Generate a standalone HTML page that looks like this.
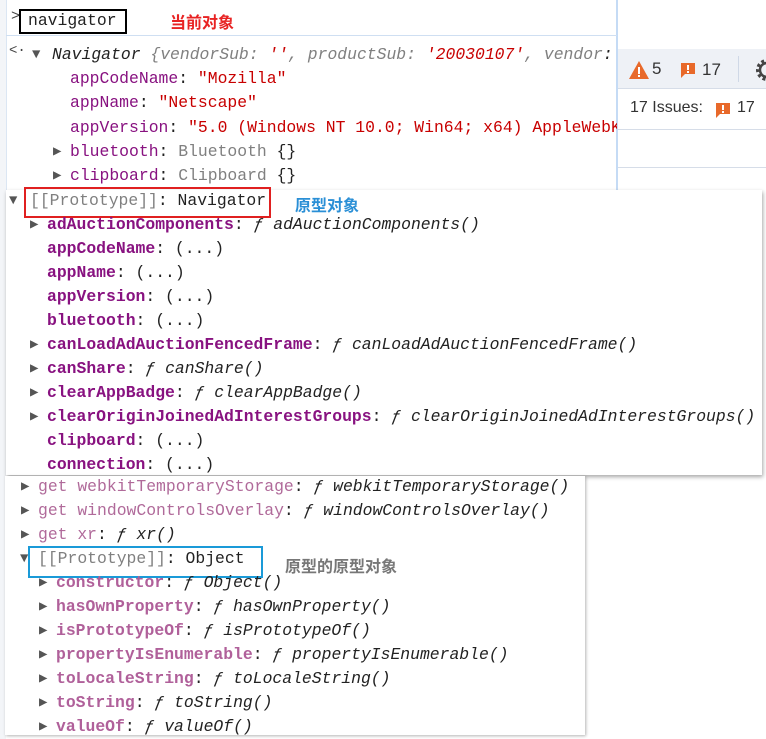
<!DOCTYPE html>
<html><head><meta charset="utf-8"><style>
*{margin:0;padding:0;box-sizing:border-box}
body{width:766px;height:739px;background:#fff;position:relative;overflow:hidden;font-family:"Liberation Mono",monospace;font-size:16.4px;color:#222}
.abs{position:absolute}
.row{position:absolute;white-space:pre;height:24px;line-height:24px;margin-top:1px}
.k{color:#881280}
.kb{color:#881280;font-weight:bold}
.kp{color:#b0609a;font-weight:bold}
.kg{color:#b06a9a}
.s{color:#c80000}
.g{color:#808080}
.i{font-style:italic}
.t{position:absolute;font-size:14px;color:#555;line-height:24px;margin-top:1px}
.cjk{font-family:"Liberation Sans","Noto Sans CJK SC",sans-serif;font-weight:bold;font-size:16px;position:absolute;white-space:nowrap}
</style></head><body>
<div class="abs" style="left:617px;top:49px;width:149px;height:40px;background:#eef1f6;border-bottom:1px solid #d6dde8"></div>
<div class="abs" style="left:738px;top:56px;width:1px;height:26px;background:#cfd8e6"></div>
<svg class="abs" style="left:628px;top:60px" width="22" height="20"><path d="M11 1 L21 19 H1 Z" fill="#e8692a"/><rect x="10" y="7" width="2" height="7" fill="#fff"/><rect x="10" y="15" width="2" height="2" fill="#fff"/></svg>
<div class="abs" style="left:652px;top:59px;font-family:'Liberation Sans',sans-serif;font-size:17px;color:#333">5</div>
<svg class="abs" style="left:680px;top:62px" width="16" height="17"><path d="M1 1 H15 V12 H5 L1 16 Z" fill="#e8692a"/><rect x="7" y="3" width="2" height="5" fill="#fff"/><rect x="7" y="9" width="2" height="2" fill="#fff"/></svg>
<div class="abs" style="left:702px;top:60px;font-family:'Liberation Sans',sans-serif;font-size:17px;color:#333">17</div>
<svg class="abs" style="left:752px;top:57px" width="14" height="26"><circle cx="15" cy="13" r="7" fill="none" stroke="#444" stroke-width="2.5"/><circle cx="15" cy="13" r="9.5" fill="none" stroke="#444" stroke-width="3" stroke-dasharray="3 2.5"/></svg>
<div class="abs" style="left:630px;top:99px;font-family:'Liberation Sans',sans-serif;font-size:16px;color:#333">17 Issues:</div>
<svg class="abs" style="left:715px;top:102px" width="16" height="17"><path d="M1 1 H15 V12 H5 L1 16 Z" fill="#e8692a"/><rect x="7" y="3" width="2" height="5" fill="#fff"/><rect x="7" y="9" width="2" height="2" fill="#fff"/></svg>
<div class="abs" style="left:737px;top:99px;font-family:'Liberation Sans',sans-serif;font-size:16px;color:#333">17</div>
<div class="abs" style="left:617px;top:129px;width:149px;height:1px;background:#d6dde8"></div>
<div class="abs" style="left:617px;top:167px;width:149px;height:1px;background:#d6dde8"></div>
<div class="abs" style="left:0;top:0;width:6px;height:739px;background:#f3f5f8"></div>

<div class="abs" style="left:6px;top:0;width:612px;height:192px;background:#fff;border-right:2px solid #c5dbf5;border-left:1px solid #dbe6f3"></div>
<div class="abs" style="left:6px;top:35px;width:611px;height:1px;background:#cfdff2"></div>
<div class="abs" style="left:11px;top:8px;font-size:15px;color:#444">&gt;</div>
<div class="abs" style="left:19px;top:9px;width:108px;height:25px;border:2px solid #000"></div>
<div class="row" style="left:28px;top:8px;">navigator</div>
<div class="cjk" style="left:170px;top:9px;color:#e82323">当前对象</div>
<div class="abs" style="left:9px;top:43px;font-size:14px;color:#444">&lt;·</div>
<div class="t" style="left:32px;top:42px">▼</div>
<div class="row i" style="left:52px;top:42px">Navigator <span class="g">{vendorSub: </span><span class="s">''</span><span class="g">, productSub: </span><span class="s">'20030107'</span><span class="g">, vendor</span>:</div>
<div class="row" style="left:70px;top:66px"><span class="k">appCodeName</span>: <span class="s">"Mozilla"</span></div>
<div class="row" style="left:70px;top:90px"><span class="k">appName</span>: <span class="s">"Netscape"</span></div>
<div class="row" style="left:70px;top:115px;width:547px;overflow:hidden"><span class="k">appVersion</span>: <span class="s">"5.0 (Windows NT 10.0; Win64; x64) AppleWebKit</span></div>
<div class="t" style="left:53px;top:139px">▶</div>
<div class="row" style="left:70px;top:139px"><span class="k">bluetooth</span>: <span class="g">Bluetooth </span>{}</div>
<div class="t" style="left:53px;top:163px">▶</div>
<div class="row" style="left:70px;top:163px"><span class="k">clipboard</span>: <span class="g">Clipboard </span>{}</div>

<div class="abs" style="left:6px;top:190px;width:756px;height:285px;background:#fff;box-shadow:1px 2px 4px rgba(0,0,0,.35)"></div>
<div class="abs" style="left:24px;top:187px;width:247px;height:31px;border:2px solid #e02020"></div>
<div class="t" style="left:9px;top:188px">▼</div>
<div class="row" style="left:30px;top:188px"><span class="g">[[Prototype]]</span>: Navigator</div>
<div class="cjk" style="left:295px;top:192px;color:#2a8fd6">原型对象</div>
<div class="t" style="left:30px;top:212px">▶</div><div class="row" style="left:47px;top:212px"><span class="kb">adAuctionComponents</span>: <span class="i">ƒ adAuctionComponents()</span></div>
<div class="row" style="left:47px;top:236px"><span class="kb">appCodeName</span>: (...)</div>
<div class="row" style="left:47px;top:260px"><span class="kb">appName</span>: (...)</div>
<div class="row" style="left:47px;top:284px"><span class="kb">appVersion</span>: (...)</div>
<div class="row" style="left:47px;top:308px"><span class="kb">bluetooth</span>: (...)</div>
<div class="t" style="left:30px;top:332px">▶</div><div class="row" style="left:47px;top:332px"><span class="kb">canLoadAdAuctionFencedFrame</span>: <span class="i">ƒ canLoadAdAuctionFencedFrame()</span></div>
<div class="t" style="left:30px;top:356px">▶</div><div class="row" style="left:47px;top:356px"><span class="kb">canShare</span>: <span class="i">ƒ canShare()</span></div>
<div class="t" style="left:30px;top:380px">▶</div><div class="row" style="left:47px;top:380px"><span class="kb">clearAppBadge</span>: <span class="i">ƒ clearAppBadge()</span></div>
<div class="t" style="left:30px;top:404px">▶</div><div class="row" style="left:47px;top:404px"><span class="kb">clearOriginJoinedAdInterestGroups</span>: <span class="i">ƒ clearOriginJoinedAdInterestGroups()</span></div>
<div class="row" style="left:47px;top:428px"><span class="kb">clipboard</span>: (...)</div>
<div class="row" style="left:47px;top:452px"><span class="kb">connection</span>: (...)</div>

<div class="abs" style="left:5px;top:476px;width:580px;height:259px;background:#fff;box-shadow:1px 1px 3px rgba(0,0,0,.3)"></div>
<div class="t" style="left:21px;top:474px">▶</div><div class="row" style="left:38px;top:474px"><span class="kg">get webkitTemporaryStorage</span>: <span class="i">ƒ webkitTemporaryStorage()</span></div>
<div class="t" style="left:21px;top:498px">▶</div><div class="row" style="left:38px;top:498px"><span class="kg">get windowControlsOverlay</span>: <span class="i">ƒ windowControlsOverlay()</span></div>
<div class="t" style="left:21px;top:522px">▶</div><div class="row" style="left:38px;top:522px"><span class="kg">get xr</span>: <span class="i">ƒ xr()</span></div>
<div class="t" style="left:20px;top:546px">▼</div><div class="row" style="left:38px;top:546px"><span class="g">[[Prototype]]</span>: Object</div>
<div class="abs" style="left:28px;top:546px;width:235px;height:32px;border:2px solid #1a9ad8"></div>
<div class="cjk" style="left:285px;top:553px;color:#777">原型的原型对象</div>
<div class="t" style="left:39px;top:570px">▶</div><div class="row" style="left:56px;top:570px"><span class="kp">constructor</span>: <span class="i">ƒ Object()</span></div>
<div class="t" style="left:39px;top:594px">▶</div><div class="row" style="left:56px;top:594px"><span class="kp">hasOwnProperty</span>: <span class="i">ƒ hasOwnProperty()</span></div>
<div class="t" style="left:39px;top:618px">▶</div><div class="row" style="left:56px;top:618px"><span class="kp">isPrototypeOf</span>: <span class="i">ƒ isPrototypeOf()</span></div>
<div class="t" style="left:39px;top:642px">▶</div><div class="row" style="left:56px;top:642px"><span class="kp">propertyIsEnumerable</span>: <span class="i">ƒ propertyIsEnumerable()</span></div>
<div class="t" style="left:39px;top:666px">▶</div><div class="row" style="left:56px;top:666px"><span class="kp">toLocaleString</span>: <span class="i">ƒ toLocaleString()</span></div>
<div class="t" style="left:39px;top:690px">▶</div><div class="row" style="left:56px;top:690px"><span class="kp">toString</span>: <span class="i">ƒ toString()</span></div>
<div class="t" style="left:39px;top:714px">▶</div><div class="row" style="left:56px;top:714px"><span class="kp">valueOf</span>: <span class="i">ƒ valueOf()</span></div>
</body></html>
